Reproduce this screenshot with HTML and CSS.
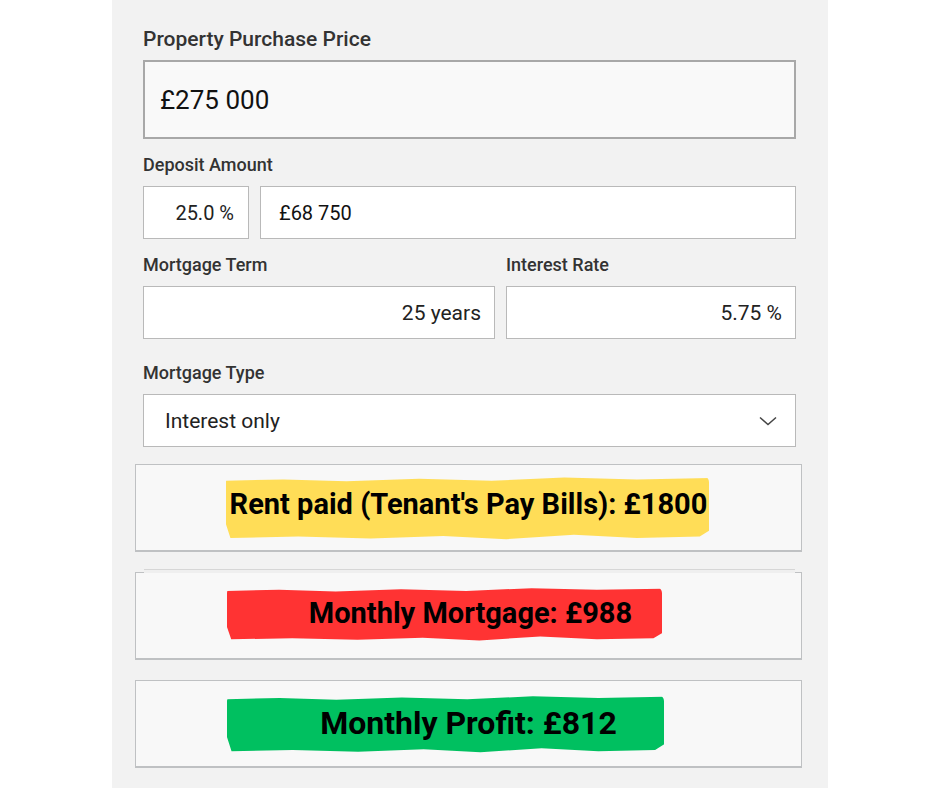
FILE: index.html
```html
<!DOCTYPE html>
<html lang="en">
<head>
    <meta charset="UTF-8">
    <meta name="viewport" content="width=device-width, initial-scale=1.0">
    <title>Mortgage Calculator</title>
    <link rel="stylesheet" href="styles.css">
</head>
<body>

    <div class="panel">
        <div class="fields">
            <div class="group">
                <div class="label">Property Purchase Price</div>
                <div class="field field-big">£275 000</div>
            </div>

            <div class="group">
                <div class="label label-sm">Deposit Amount</div>
                <div class="row">
                    <div class="field field-pct">25.0 %</div>
                    <div class="field field-left">£68 750</div>
                </div>
            </div>

            <div class="group">
                <div class="row row-half">
                    <div class="col">
                        <div class="label label-sm">Mortgage Term</div>
                        <div class="field field-right">25 years</div>
                    </div>
                    <div class="col col-rate">
                        <div class="label label-sm">Interest Rate</div>
                        <div class="field field-right">5.75 %</div>
                    </div>
                </div>
            </div>

            <div class="group group-type">
                <div class="label label-sm">Mortgage Type</div>
                <div class="field field-select">
                    <span>Interest only</span>
                    <svg width="18" height="10" viewBox="0 0 18 10"><path d="M1 1.5 L9 8.5 L17 1.5" fill="none" stroke="#444" stroke-width="1.5"/></svg>
                </div>
            </div>
        </div>

        <!-- results -->
        <div class="results">
            <div class="result">
                <span class="mark mark-yellow">Rent paid (Tenant's Pay Bills): £1800</span>
            </div>
            <div class="result result-stacked">
                <span class="mark mark-red">Monthly Mortgage: £988</span>
            </div>
            <div class="result">
                <span class="mark mark-green">Monthly Profit: £812</span>
            </div>
        </div>
    </div>

</body>
</html>
```

FILE: styles.css
```css
body {
    margin: 0;
    background: #ffffff;
    font-family: Roboto, "Liberation Sans", sans-serif;
    color: #222;
}

.panel {
    width: 716px;
    height: 788px;
    margin-left: 112px;
    background: #f2f2f2;
    padding-top: 28px;
    box-sizing: border-box;
}

.fields {
    padding: 0 32px 0 31px;
}

.group {
    margin-bottom: 16px;
}

.group-type {
    margin-top: 24px;
    margin-bottom: 17px;
}

.label {
    font-size: 21px;
    font-weight: 500;
    color: #333;
    line-height: 22px;
    margin-bottom: 10px;
}

.label-sm {
    font-size: 18px;
    line-height: 20px;
    margin-bottom: 11px;
}

.field {
    box-sizing: border-box;
    height: 53px;
    background: #ffffff;
    border: 1px solid #b9b9b9;
    display: flex;
    align-items: center;
    font-size: 21px;
    color: #222;
}

.field-big {
    height: 79px;
    background: #f9f9f9;
    border: 2px solid #a8a8a8;
    padding-left: 15px;
    font-size: 26px;
    color: #111;
}

.row {
    display: flex;
    gap: 11px;
}

.field-pct {
    width: 106px;
    justify-content: flex-end;
    padding-right: 14px;
    font-size: 20px;
}

.field-left {
    flex: 1;
    padding-left: 18px;
    font-size: 20px;
    color: #111;
}

.row-half .col {
    width: 352px;
}

.row-half .col-rate {
    flex: 1;
}

.field-right {
    justify-content: flex-end;
    padding-right: 13px;
}

.field-select {
    justify-content: space-between;
    padding: 0 18px 0 21px;
    font-size: 21px;
}

.field-select svg {
    display: block;
}

.results {
    padding: 0 26px 0 23px;
}

.result {
    box-sizing: border-box;
    height: 88px;
    background: #f8f8f8;
    border: 1px solid #bfc1c3;
    border-bottom-width: 2px;
    display: flex;
    align-items: center;
    justify-content: center;
    margin-bottom: 20px;
    position: relative;
}

.result-stacked::before {
    content: '';
    position: absolute;
    left: 8px;
    right: 6px;
    top: -4px;
    height: 3px;
    border-top: 1px solid #d6d6d6;
    background: #efefef;
}

.mark {
    position: relative;
    z-index: 0;
    font-size: 29px;
    font-weight: 700;
    color: #000;
}

.mark::before {
    content: '';
    position: absolute;
    z-index: -1;
    border-radius: 6px;
    clip-path: polygon(0% 8%, 12% 6%, 25% 9%, 40% 5%, 55% 8%, 70% 3%, 85% 6%, 100% 4%, 101% 80%, 98% 94%, 85% 96%, 72% 91%, 58% 98%, 45% 93%, 30% 97%, 15% 94%, 1% 96%, -1% 50%);
}

.mark-yellow {
    top: -4px;
}

.mark-yellow::before {
    inset: -11px -2px -20px -4px;
    background: #ffdd57;
}

.mark-red {
    top: -3px;
    left: 2px;
}

.mark-red::before {
    inset: -9px -30px -12px -82px;
    background: #ff3333;
}

.mark-green {
    font-size: 32px;
    top: -1px;
}

.mark-green::before {
    inset: -9px -47px -12px -93px;
    background: #00c060;
}
```
